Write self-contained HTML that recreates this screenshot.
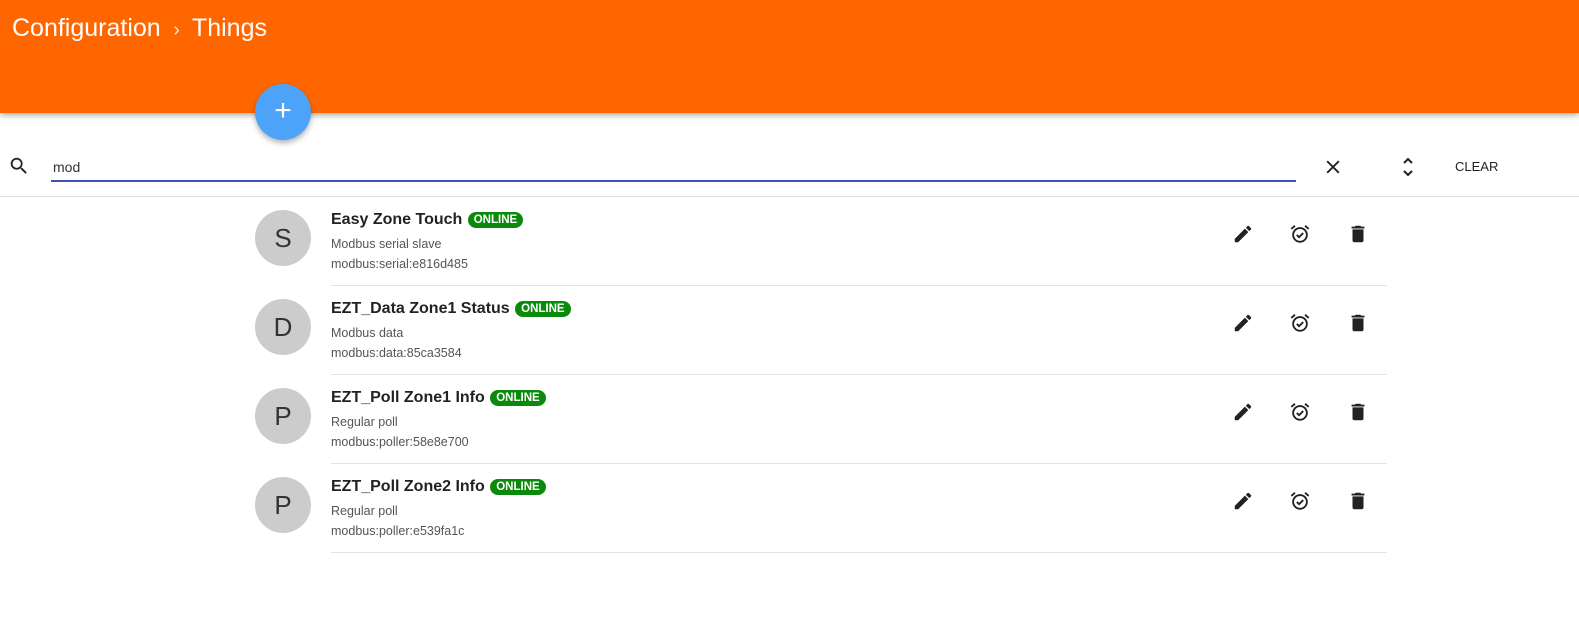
<!DOCTYPE html>
<html><head><style>
body{margin:0;width:1579px;height:641px;overflow:hidden;background:#fff;font-family:"Liberation Sans",sans-serif;position:relative}
.hdr{position:absolute;left:0;top:0;width:1579px;height:113px;background:#ff6600;box-shadow:0 2px 6px rgba(0,0,0,.35)}
.ttl{position:absolute;left:12px;top:14px;color:#fff;font-size:25px;font-weight:300}
.fab{position:absolute;left:255px;top:84px;width:56px;height:56px;border-radius:50%;background:#4da3f7;box-shadow:0 3px 6px rgba(0,0,0,.3);color:#fff;font-size:30px;text-align:center;line-height:54px}
.abs{position:absolute}
.row{position:absolute;left:0;width:1579px;height:89px}
.av{position:absolute;left:255px;top:14px;width:56px;height:56px;border-radius:50%;background:#ccc;color:#333;font-size:26px;text-align:center;line-height:56px;font-weight:300}
.t{position:absolute;left:331px;top:15px;font-size:16px;color:#222;font-weight:bold}
.b{display:inline-block;background:#0a8a0a;color:#fff;font-size:11.5px;font-weight:bold;border-radius:9px;padding:2px 6px;vertical-align:1px;margin-left:1px}
.s{position:absolute;left:331px;font-size:12.5px;color:#555}
.sep{position:absolute;left:331px;top:89px;width:1056px;height:1px;background:#e3e3e3}
.ic{position:absolute;top:27px}
</style></head><body>
<div class="hdr"><div class="ttl">Configuration <span style="font-size:20px;opacity:.8">&nbsp;›&nbsp;</span> Things</div></div>
<div class="fab">+</div>
<svg class="abs" style="left:8px;top:155px" width="22" height="22" viewBox="0 0 24 24"><path d="M15.5 14h-.8l-.3-.3A6.5 6.5 0 1 0 9.5 16a6.5 6.5 0 0 0 4.2-1.6l.3.3v.8l5 5 1.5-1.5zm-6 0a4.5 4.5 0 1 1 0-9 4.5 4.5 0 0 1 0 9z" fill="#222"/></svg>
<div class="abs" style="left:53px;top:159px;font-size:14px;color:#333">mod</div>
<div class="abs" style="left:51px;top:180px;width:1245px;height:2px;background:#3f51b5"></div>
<svg class="abs" style="left:1323px;top:157px" width="20" height="20" viewBox="0 0 24 24"><path d="M5 5L19 19M19 5L5 19" stroke="#222" stroke-width="2.2"/></svg>
<svg class="abs" style="left:1400px;top:157px" width="16" height="20" viewBox="0 0 16 20"><path d="M4 6l4-4 4 4M4 14l4 4 4-4" stroke="#222" stroke-width="2" fill="none"/></svg>
<div class="abs" style="left:1455px;top:159px;font-size:13px;color:#222;font-weight:500">CLEAR</div>
<div class="abs" style="left:0;top:196px;width:1579px;height:1px;background:#ddd"></div>

<div class="row" style="top:196px"><div class="av">S</div><div class="t">Easy Zone Touch <span class="b">ONLINE</span></div><div class="s" style="top:41px">Modbus serial slave</div><div class="s" style="top:61px">modbus:serial:e816d485</div><div class="sep"></div>
<svg class="ic" style="left:1232px" width="22" height="22" viewBox="0 0 24 24"><path d="M3 17.25V21h3.75L17.8 9.94l-3.75-3.75zM20.7 7.04a1 1 0 0 0 0-1.41l-2.34-2.34a1 1 0 0 0-1.41 0l-1.83 1.83 3.75 3.75z" fill="#222"/></svg>
<svg class="ic" style="left:1289px" width="22" height="22" viewBox="0 0 24 24"><circle cx="12" cy="13" r="7.5" stroke="#222" stroke-width="2" fill="none"/><path d="M2.5 6.5l4-3.5M21.5 6.5l-4-3.5M8.5 13l2.5 2.5 4.5-4.5" stroke="#222" stroke-width="2" fill="none"/></svg>
<svg class="ic" style="left:1347px" width="22" height="22" viewBox="0 0 24 24"><path d="M6 19a2 2 0 0 0 2 2h8a2 2 0 0 0 2-2V7H6zM19 4h-3.5l-1-1h-5l-1 1H5v2h14z" fill="#222"/></svg></div>

<div class="row" style="top:285px"><div class="av">D</div><div class="t">EZT_Data Zone1 Status <span class="b">ONLINE</span></div><div class="s" style="top:41px">Modbus data</div><div class="s" style="top:61px">modbus:data:85ca3584</div><div class="sep"></div>
<svg class="ic" style="left:1232px" width="22" height="22" viewBox="0 0 24 24"><path d="M3 17.25V21h3.75L17.8 9.94l-3.75-3.75zM20.7 7.04a1 1 0 0 0 0-1.41l-2.34-2.34a1 1 0 0 0-1.41 0l-1.830 1.83 3.75 3.75z" fill="#222"/></svg>
<svg class="ic" style="left:1289px" width="22" height="22" viewBox="0 0 24 24"><circle cx="12" cy="13" r="7.5" stroke="#222" stroke-width="2" fill="none"/><path d="M2.5 6.5l4-3.5M21.5 6.5l-4-3.5M8.5 13l2.5 2.5 4.5-4.5" stroke="#222" stroke-width="2" fill="none"/></svg>
<svg class="ic" style="left:1347px" width="22" height="22" viewBox="0 0 24 24"><path d="M6 19a2 2 0 0 0 2 2h8a2 2 0 0 0 2-2V7H6zM19 4h-3.5l-1-1h-5l-1 1H5v2h14z" fill="#222"/></svg></div>

<div class="row" style="top:374px"><div class="av">P</div><div class="t">EZT_Poll Zone1 Info <span class="b">ONLINE</span></div><div class="s" style="top:41px">Regular poll</div><div class="s" style="top:61px">modbus:poller:58e8e700</div><div class="sep"></div>
<svg class="ic" style="left:1232px" width="22" height="22" viewBox="0 0 24 24"><path d="M3 17.25V21h3.75L17.8 9.94l-3.75-3.75zM20.7 7.04a1 1 0 0 0 0-1.41l-2.34-2.34a1 1 0 0 0-1.41 0l-1.83 1.83 3.75 3.75z" fill="#222"/></svg>
<svg class="ic" style="left:1289px" width="22" height="22" viewBox="0 0 24 24"><circle cx="12" cy="13" r="7.5" stroke="#222" stroke-width="2" fill="none"/><path d="M2.5 6.5l4-3.5M21.5 6.5l-4-3.5M8.5 13l2.5 2.5 4.5-4.5" stroke="#222" stroke-width="2" fill="none"/></svg>
<svg class="ic" style="left:1347px" width="22" height="22" viewBox="0 0 24 24"><path d="M6 19a2 2 0 0 0 2 2h8a2 2 0 0 0 2-2V7H6zM19 4h-3.5l-1-1h-5l-1 1H5v2h14z" fill="#222"/></svg></div>

<div class="row" style="top:463px"><div class="av">P</div><div class="t">EZT_Poll Zone2 Info <span class="b">ONLINE</span></div><div class="s" style="top:41px">Regular poll</div><div class="s" style="top:61px">modbus:poller:e539fa1c</div><div class="sep"></div>
<svg class="ic" style="left:1232px" width="22" height="22" viewBox="0 0 24 24"><path d="M3 17.25V21h3.75L17.8 9.94l-3.75-3.75zM20.7 7.04a1 1 0 0 0 0-1.41l-2.34-2.34a1 1 0 0 0-1.41 0l-1.83 1.83 3.75 3.75z" fill="#222"/></svg>
<svg class="ic" style="left:1289px" width="22" height="22" viewBox="0 0 24 24"><circle cx="12" cy="13" r="7.5" stroke="#222" stroke-width="2" fill="none"/><path d="M2.5 6.5l4-3.5M21.5 6.5l-4-3.5M8.5 13l2.5 2.5 4.5-4.5" stroke="#222" stroke-width="2" fill="none"/></svg>
<svg class="ic" style="left:1347px" width="22" height="22" viewBox="0 0 24 24"><path d="M6 19a2 2 0 0 0 2 2h8a2 2 0 0 0 2-2V7H6zM19 4h-3.5l-1-1h-5l-1 1H5v2h14z" fill="#222"/></svg></div>
</body></html>
